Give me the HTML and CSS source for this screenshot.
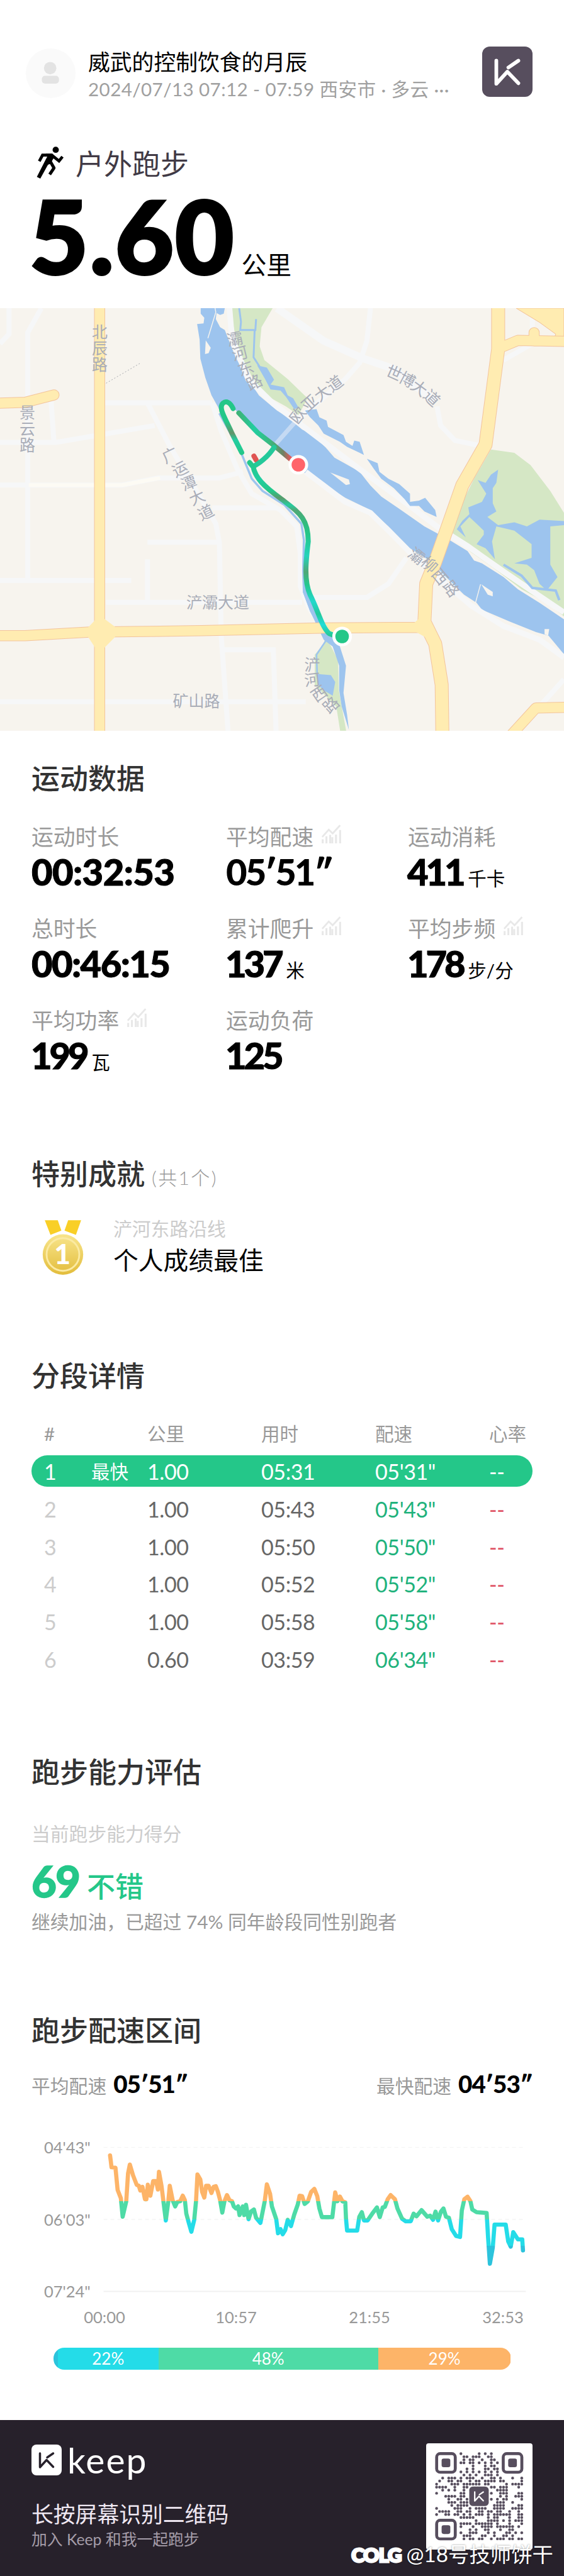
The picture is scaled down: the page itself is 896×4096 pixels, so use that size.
FILE: index.html
```html
<!DOCTYPE html>
<html lang="zh-CN">
<head>
    <meta charset="UTF-8">
    <meta name="viewport" content="width=device-width, initial-scale=1.0">
    <title>户外跑步 5.60 公里</title>
    <link rel="stylesheet" href="styles.css">
</head>
<body>

<!-- shared icons -->
<svg class="defs" width="0" height="0">
    <symbol id="icon-k" viewBox="0 0 96 96">
        <path d="M27 27V71L48 48L69 70M50 40L69 27" fill="none" stroke="currentColor" stroke-width="7" stroke-linecap="round" stroke-linejoin="round"/>
    </symbol>
    <symbol id="icon-chart" viewBox="0 0 110 110">
        <path d="M3 74L40 33L62 54L104 8" fill="none" stroke="#e8e8e8" stroke-width="10"/>
        <path d="M6 110V87M27 110V70M48 110V62M60 110V75M81 110V60M104 110V35" stroke="#e8e8e8" stroke-width="11"/>
    </symbol>
</svg>

<div class="page">
    <header class="header">
        <div class="avatar">
            <svg viewBox="0 0 96 96">
                <ellipse cx="47" cy="38" rx="12" ry="12" fill="#e3e3e3"/>
                <rect x="31" y="53" width="33" height="15" rx="6" fill="#e3e3e3"/>
            </svg>
        </div>
        <div class="user">
            <div class="user-name">威武的控制饮食的月辰</div>
            <div class="user-meta">2024/07/13 07:12 - 07:59 西安市 · 多云 ···</div>
        </div>
        <div class="app-logo"><svg><use href="#icon-k"/></svg></div>
    </header>

    <div class="intro">
        <div class="sport">
            <svg class="runner" viewBox="30 24 160 190">
                <circle cx="141" cy="45" r="18"/>
                <path d="M46 111L65 76H118L160 110L180 85" fill="none" stroke="#000" stroke-width="17"/>
                <path d="M84 68H122L134 84L110 126L96 132L52 212L32 202L92 84Z"/>
                <path d="M108 110L131 150L106 188" fill="none" stroke="#000" stroke-width="18" stroke-linejoin="round"/>
            </svg>
            <span>户外跑步</span>
        </div>
        <div class="distance"><b>5.60</b><span>公里</span></div>
    </div>

    <svg class="map" viewBox="0 0 896 672">
        <rect width="896" height="672" fill="#f7f4ee"/>
        <g class="shape" transform="scale(.5714 .4339)">
            <!-- minor roads -->
            <g class="road">
                <path d="M25 0V95L0 130M115 0L77 90V1000M142 340L150 492M0 492H155L430 430M290 347H590M410 347L470 500L600 790L610 860L615 1200L635 1568M410 858H605M0 998H365M410 920V1078M295 1078H840M0 648H340L440 622H610L660 605L675 598M590 732H770M618 1252H760L768 1568M0 1442H850"/>
                <path d="M1030 0L1020 120L1000 200L960 260L820 415"/>
                <path d="M1215 360L1225 430L1265 485L1350 508M1480 0V130L1400 190M860 1060H1020L1080 1010L1130 915M1568 1360L1500 1460"/>
                <path d="M590 347L615 450L660 590L700 680L780 740L825 800L835 900L835 1020L860 1100L890 1160"/>
            </g>
            <path class="road wide" d="M770 0L900 120L1010 185L1090 220L1210 340"/>
            <path d="M80 648H340L445 622" fill="none" stroke="#fdfbf4" stroke-width="6"/>

            <!-- parks -->
            <path fill="#d5e7c5" d="M645 0H758L727 70L722 140L735 190L800 260L855 330L830 392L795 360L740 320L700 250L665 160L648 60Z"/>
            <path fill="#d5e7c5" d="M1365 518L1430 530L1475 575L1530 670L1568 750V1130L1520 1080L1450 1030L1370 950L1310 895L1255 835L1275 740L1320 620Z"/>
            <path fill="#d5e7c5" d="M905 1200L940 1290L942 1400L965 1568H948L935 1460L905 1420L875 1380L875 1270L900 1230Z"/>

            <!-- river -->
            <path fill="#9dc4ee" d="M558 0H625L622 20L612 25L602 18L600 40L612 70L625 80L640 130L655 180L680 240L700 280L720 320L770 375L800 400L840 445L865 460L905 510L930 548L960 570L1000 600L1030 650L1060 690L1110 735L1180 800L1250 850L1300 890L1318 925L1340 935L1400 985L1440 1030L1500 1080L1568 1140V1268L1525 1200L1490 1187L1420 1150L1340 1105L1325 1080L1290 1050L1240 985L1200 930L1140 880L1080 800L1030 740L960 695L900 645L830 590L765 505L716 450L664 386L640 352L615 342L612 376L588 319L571 255L557 185L555 115L548 58L566 56L568 35L558 20Z"/>
            <path fill="#f7f4ee" d="M572 118L586 145L580 165L570 168ZM918 602L970 628L973 645L962 648ZM1338 1012L1370 1040L1370 1056L1356 1050ZM1514 1176L1527 1176L1524 1200L1514 1195Z"/>
            <path d="M598 0L600 15L578 110M1336 1012L1322 1080" fill="none" stroke="#f7f4ee" stroke-width="1.4"/>
            <path d="M822 415L765 500" fill="none" stroke="#c5daf3" stroke-width="7"/>
            <path class="road bank" d="M638 0L645 110L690 260L760 350L830 420L905 495L1000 590L1120 705L1220 805L1300 872L1400 965L1500 1055L1568 1115"/>
            <path class="road bank" d="M850 600L960 710L1030 750L1080 815L1140 895L1230 1000L1310 1090L1400 1165L1500 1215L1568 1280"/>

            <!-- streams and ponds -->
            <path d="M665 0L670 50L668 80H710L712 40M708 80L705 180L722 215" fill="none" stroke="#9dc4ee" stroke-width="3"/>
            <path fill="#9dc4ee" d="M715 210L742 218L762 262L752 280L790 290L800 320L815 330L830 365L818 370L795 325L780 302L752 298L738 262ZM848 375L880 370L888 400L908 412L912 435L955 465L962 490L980 505L985 485L1000 490L1012 538L1000 530L965 508L945 490L900 460L885 430L862 400ZM1020 552L1050 568L1055 600L1080 625L1110 645L1140 680L1140 710L1165 705L1182 695L1210 740L1214 765L1180 745L1165 725L1140 725L1125 700L1095 660L1060 625L1040 590Z"/>
            <path fill="#9dc4ee" d="M1385 592L1380 640L1370 660L1370 715L1380 745L1355 765L1385 795L1430 785L1465 800L1500 775L1568 780V795L1530 800L1530 940L1550 985L1520 1035L1500 1010L1485 960L1465 940L1430 935L1478 915L1478 865L1430 815L1380 800L1368 855L1376 920L1350 880L1325 865L1345 830L1345 815L1305 765L1280 800L1295 840L1270 810L1285 780L1305 755L1302 730L1340 710L1352 680L1328 630L1350 640L1365 610Z"/>
            <path d="M1400 940L1450 980L1480 1025L1545 1035L1555 1070" fill="none" stroke="#9dc4ee" stroke-width="4"/>
            <path d="M610 385L672 535L700 625L730 670L790 720L838 790L845 850L843 960L845 1040L865 1110L890 1170L910 1215" fill="none" stroke="#9dc4ee" stroke-width="3.5"/>
            <path fill="#9dc4ee" d="M842 1000L870 1060L905 1170L945 1240L962 1310L955 1410L965 1490L970 1545L950 1460L943 1400L943 1310L925 1240L900 1215L862 1110L842 1040ZM880 1340L920 1345L932 1370L925 1420L900 1400L884 1380Z"/>
            <path d="M908 1215L880 1270L882 1350" fill="none" stroke="#9dc4ee" stroke-width="2.5"/>

            <!-- main roads -->
            <path fill="#ffecb1" stroke="#f3bf94" stroke-width="1" d="M1435 0H1568V130L1540 115L1545 95L1500 52Z"/>
            <g class="major">
                <path class="casing w-s" d="M277 -5V1573"/>
                <path class="casing w-s" d="M-5 348L70 345L150 318"/>
                <path class="casing w-s" d="M-5 1200H70L250 1187L560 1182L900 1172L1100 1170H1180"/>
                <path class="casing w-m" d="M1385 -5V150L1350 500L1285 650L1245 800L1210 930L1185 1010L1180 1150L1210 1230L1228 1380L1230 1573"/>
                <path class="casing w-s" d="M1400 140L1440 118L1573 122M1485 90V120"/>
                <path class="casing w-s" d="M1415 1573L1490 1465L1573 1463"/>
                <path class="fill w-s" d="M277 -5V1573"/>
                <path class="fill w-s" d="M-5 348L70 345L150 318"/>
                <path class="fill w-s" d="M-5 1200H70L250 1187L560 1182L900 1172L1100 1170H1180"/>
                <path class="fill w-m" d="M1385 -5V150L1350 500L1285 650L1245 800L1210 930L1185 1010L1180 1150L1210 1230L1228 1380L1230 1573"/>
                <path class="fill w-s" d="M1400 140L1440 118L1573 122M1485 90V120"/>
                <path class="fill w-s" d="M1415 1573L1490 1465L1573 1463"/>
            </g>
            <path fill="#ffecb1" d="M245 1170L277 1125L320 1168V1205L290 1245H265L245 1205ZM1150 1155L1180 1120L1215 1210L1195 1215L1155 1185Z"/>
            <path d="M295 275L392 200" stroke="#8f949c" stroke-width=".8" stroke-dasharray="2 3"/>
        </g>

        <g id="map-labels" class="map-labels"></g>

        <!-- running track, coloured by pace -->
        <defs>
            <linearGradient id="track-main" gradientUnits="userSpaceOnUse" x1="0" y1="560" x2="0" y2="1205">
                <stop offset="0" stop-color="#24c789"/>
                <stop offset=".1" stop-color="#22cda0"/>
                <stop offset=".17" stop-color="#24c789"/>
                <stop offset=".21" stop-color="#5a9a6a"/>
                <stop offset=".25" stop-color="#25cc9f"/>
                <stop offset=".28" stop-color="#4fa877"/>
                <stop offset=".35" stop-color="#31ba7d"/>
                <stop offset=".42" stop-color="#24c789"/>
                <stop offset=".54" stop-color="#23d3bb"/>
                <stop offset=".63" stop-color="#4fa877"/>
                <stop offset=".7" stop-color="#25c78d"/>
                <stop offset=".8" stop-color="#23d8cc"/>
                <stop offset=".87" stop-color="#24c99b"/>
                <stop offset=".93" stop-color="#23dcd8"/>
                <stop offset="1" stop-color="#24c789"/>
            </linearGradient>
            <linearGradient id="track-left" gradientUnits="userSpaceOnUse" x1="0" y1="340" x2="0" y2="530">
                <stop offset=".4" stop-color="#24c789"/>
                <stop offset=".62" stop-color="#63946a"/>
                <stop offset=".75" stop-color="#23cda0"/>
                <stop offset="1" stop-color="#24c789"/>
            </linearGradient>
            <linearGradient id="track-end" gradientUnits="userSpaceOnUse" x1="664" y1="0" x2="810" y2="0">
                <stop offset="0" stop-color="#3db377"/>
                <stop offset=".3" stop-color="#23cda0"/>
                <stop offset=".6" stop-color="#3cb77c"/>
                <stop offset=".72" stop-color="#55a070"/>
                <stop offset=".85" stop-color="#727f62"/>
                <stop offset="1" stop-color="#f0535a"/>
            </linearGradient>
        </defs>
        <g class="shape track" transform="scale(.5714 .4339)">
            <path d="M706 542L712 556" stroke="#df5452"/>
            <path d="M648 368C640 345 629 338 620 348C606 365 625 400 645 459L672 529" stroke="url(#track-left)"/>
            <path d="M664 384L716 456L762 503L810 556" stroke="url(#track-end)"/>
            <path d="M762 510C745 545 720 570 704 580" stroke="#24c99a"/>
            <path d="M694 566L704 582C710 620 730 650 784 701C832 750 857 770 857 855C850 930 845 1000 862 1050C885 1110 895 1170 915 1192L940 1205" stroke="url(#track-main)"/>
        </g>
        <circle cx="474" cy="249" r="15.6" fill="#fff"/>
        <circle cx="474" cy="249" r="10.8" fill="#ff646b"/>
        <circle cx="543.5" cy="522" r="15.6" fill="#fff"/>
        <circle cx="543.5" cy="522" r="10.8" fill="#24c789"/>
    </svg>

    <section class="section data">
        <h2>运动数据</h2>
        <div class="stats">
            <div class="stat"><label>运动时长</label><div class="value">00:32:53</div></div>
            <div class="stat"><label>平均配速<svg><use href="#icon-chart"/></svg></label><div class="value avg">05′51″</div></div>
            <div class="stat"><label>运动消耗</label><div class="value tight">411<small>千卡</small></div></div>
            <div class="stat"><label>总时长</label><div class="value total">00:46:15</div></div>
            <div class="stat"><label>累计爬升<svg><use href="#icon-chart"/></svg></label><div class="value tight">137<small>米</small></div></div>
            <div class="stat"><label>平均步频<svg><use href="#icon-chart"/></svg></label><div class="value tight">178<small>步/分</small></div></div>
            <div class="stat"><label>平均功率<svg><use href="#icon-chart"/></svg></label><div class="value tight">199<small>瓦</small></div></div>
            <div class="stat"><label>运动负荷</label><div class="value tight">125</div></div>
        </div>
    </section>

    <section class="section awards">
        <h2>特别成就<small>(共1个)</small></h2>
        <div class="award">
            <svg class="medal" viewBox="0 0 80 106">
                <defs>
                    <linearGradient id="gold" x1="0" y1="0" x2="0" y2="1">
                        <stop offset="0" stop-color="#f8e58c"/>
                        <stop offset="1" stop-color="#e3bd3c"/>
                    </linearGradient>
                </defs>
                <path d="M5 0H30L37 20L16 28ZM50 0H75L65 28L43 20Z" fill="#f9cf27"/>
                <circle cx="40" cy="66" r="39" fill="url(#gold)"/>
                <circle cx="40" cy="66" r="31.5" fill="none" stroke="#fbeaa2" stroke-width="3.5"/>
                <text x="39" y="85" text-anchor="middle">1</text>
            </svg>
            <div>
                <div class="award-place">浐河东路沿线</div>
                <div class="award-name">个人成绩最佳</div>
            </div>
        </div>
    </section>

    <section class="section splits">
        <h2>分段详情</h2>
        <div class="row head"><span>#</span><span></span><span>公里</span><span>用时</span><span>配速</span><span>心率</span></div>
        <div class="row best"><span>1</span><span class="tag">最快</span><span>1.00</span><span>05:31</span><span>05'31"</span><span>--</span></div>
        <div class="row"><span>2</span><span></span><span>1.00</span><span>05:43</span><span>05'43"</span><span>--</span></div>
        <div class="row"><span>3</span><span></span><span>1.00</span><span>05:50</span><span>05'50"</span><span>--</span></div>
        <div class="row"><span>4</span><span></span><span>1.00</span><span>05:52</span><span>05'52"</span><span>--</span></div>
        <div class="row"><span>5</span><span></span><span>1.00</span><span>05:58</span><span>05'58"</span><span>--</span></div>
        <div class="row"><span>6</span><span></span><span>0.60</span><span>03:59</span><span>06'34"</span><span>--</span></div>
    </section>

    <section class="section ability">
        <h2>跑步能力评估</h2>
        <div class="ability-label">当前跑步能力得分</div>
        <div class="score"><b>69</b><span>不错</span></div>
        <div class="ability-tip">继续加油，已超过 74% 同年龄段同性别跑者</div>
    </section>

    <section class="section pace">
        <h2>跑步配速区间</h2>
        <div class="pace-row">
            <div>平均配速<b>05′51″</b></div>
            <div>最快配速<b>04′53″</b></div>
        </div>
    </section>
    <svg class="chart" viewBox="0 0 896 330">
        <defs>
            <linearGradient id="zones" gradientUnits="userSpaceOnUse" x1="0" y1="400" x2="0" y2="1000">
                <stop offset=".425" stop-color="#fdb468"/>
                <stop offset=".425" stop-color="#4edba6"/>
                <stop offset=".57" stop-color="#4edba6"/>
                <stop offset=".57" stop-color="#24dce8"/>
                <stop offset=".783" stop-color="#24dce8"/>
                <stop offset=".783" stop-color="#2cc3dc"/>
            </linearGradient>
        </defs>
        <g class="shape" fill="none" transform="translate(0 -94.7) scale(.5714 .328)">
            <path d="M288 394H1462M288 743H1462" stroke="#f5f5f5" stroke-width="1.6" stroke-dasharray="6 5"/>
            <path d="M288 1092H1462" stroke="#f1f1f1" stroke-width="2"/>
            <polyline stroke="url(#zones)" stroke-width="6.6" stroke-linecap="round" stroke-linejoin="round" points="306,433 308,460 310,490 321,492 327,600 336,640 341,730 351,655 356,520 361,477 370,530 380,575 386,580 390,603 396,585 403,645 407,645 411,575 418,628 426,557 434,557 439,598 442,512 449,580 454,650 461,748 468,655 472,580 480,650 487,680 493,658 501,655 508,628 514,650 518,715 525,760 532,803 540,745 545,655 549,525 557,550 562,610 568,637 573,580 580,580 588,615 594,585 600,582 606,610 612,650 618,710 624,655 631,625 638,650 645,655 650,680 656,690 662,680 666,722 675,680 679,722 684,672 691,742 698,705 706,695 712,735 724,760 736,655 742,573 751,620 756,680 768,742 773,810 780,790 786,815 793,795 800,745 809,775 818,720 828,670 833,628 840,630 847,668 856,655 865,610 874,595 882,630 888,690 895,732 924,732 932,612 938,655 945,632 952,655 960,660 962,740 965,797 993,797 999,730 1006,708 1012,748 1022,748 1035,715 1048,685 1056,732 1064,685 1070,682 1078,645 1086,625 1098,645 1105,690 1118,740 1128,752 1142,752 1150,715 1158,728 1172,698 1188,730 1196,725 1204,745 1211,705 1218,748 1226,705 1233,690 1240,730 1248,735 1256,790 1268,823 1279,828 1284,700 1291,645 1300,633 1308,655 1313,695 1325,708 1353,712 1357,830 1362,958 1370,880 1375,768 1406,768 1413,850 1420,875 1427,805 1440,840 1452,840 1454,893"/>
        </g>
        <g class="axis">
            <text x="70" y="44">04'43"</text>
            <text x="70" y="158.5">06'03"</text>
            <text x="70" y="273">07'24"</text>
            <g text-anchor="middle">
                <text x="166" y="314">00:00</text>
                <text x="375" y="314">10:57</text>
                <text x="587" y="314">21:55</text>
                <text x="799" y="314">32:53</text>
            </g>
        </g>
    </svg>
    <div class="zones">
        <div class="zone z1" style="width: 1%"></div>
        <div class="zone z2" style="width: 22%">22%</div>
        <div class="zone z3" style="width: 48%">48%</div>
        <div class="zone z4" style="width: 29%">29%</div>
    </div>

    <footer class="footer">
        <div>
            <div class="brand"><div class="brand-icon"><svg><use href="#icon-k"/></svg></div><span>keep</span></div>
            <div class="scan">长按屏幕识别二维码</div>
            <div class="join">加入 Keep 和我一起跑步</div>
        </div>
        <svg class="qr" id="qr" viewBox="0 0 612 612">
            <rect width="612" height="612" rx="14" fill="#fff"/>
        </svg>
        <div class="watermark"><b>COLG</b>@18号技师饼干</div>
    </footer>
</div>

<script>
    const SVG = 'http://www.w3.org/2000/svg';

    function add(parent, tag, attrs, text) {
        const el = document.createElementNS(SVG, tag);
        Object.keys(attrs).forEach(k => el.setAttribute(k, attrs[k]));
        if (text) el.textContent = text;
        parent.appendChild(el);
    }

    // street names: character, x, y, rotation
    const labels = [
        ['北', 158.5, 37.5, 0], ['辰', 158.5, 63.5, 0], ['路', 158.5, 90, 0],
        ['景', 43.5, 166, 0], ['云', 43.5, 192, 0], ['路', 43.5, 218, 0],
        ['灞', 373, 49, -12], ['河', 381, 72, -14], ['东', 390.5, 96, -20], ['路', 404, 118, -26],
        ['欧', 473, 170, -52], ['亚', 492, 151, -42], ['大', 512, 135, -36], ['道', 532, 120, -36],
        ['世', 626, 103, 24], ['博', 647, 114, 28], ['大', 666, 127, 36], ['道', 686, 143, 44],
        ['广', 270, 234, -26], ['运', 286, 256, -26], ['潭', 300, 278, -22], ['大', 313, 301, -24], ['道', 327, 325, -26],
        ['灞', 662, 394, 38], ['柳', 682, 408, 42], ['西', 699, 427, 50], ['路', 717, 446, 54],
        ['浐', 496, 567, 0], ['河', 496, 591, -6], ['西', 507, 613, -34], ['路', 526, 631, -42]
    ];
    const layer = document.getElementById('map-labels');
    labels.forEach(([c, x, y, r]) => {
        add(layer, 'text', { transform: `translate(${x} ${y}) rotate(${r})`, y: 9 }, c);
    });
    add(layer, 'text', { x: 346, y: 477 }, '浐灞大道');
    add(layer, 'text', { x: 312, y: 634 }, '矿山路');

    // filled columns of each QR row, finder patterns excluded
    const rows = [
        '8 14 16 18', '9 10 12 13 14 17 18', '9 11 12 15 18 19', '8 9 11 12 14 16 18 20',
        '12 16 18 19', '10 12 16 17 19 20', '8 10 12 14 16 18 20', '9 11 13 16 17 18 20',
        '2 4 5 6 8 10 11 12 15 18 19 21 25 28', '1 4 5 7 8 11 13 14 16 17 18 19 21 22 28',
        '0 5 6 7 9 10 11 12 13 14 16 17 23 25 26 27 28', '0 1 2 3 6 9 10 18 19 21 22 23 27',
        '2 4 6 9 20 21 22 23', '0 8 9 18 21 22 23 27 28', '3 4 5 6 8 9 21 23 26 27 28',
        '4 7 8 10 18 20 22 23 28', '4 5 6 8 9 10 20 21 22 25', '5 7 8 9 10 19 20 21 22 27 28',
        '0 6 7 8 11 13 14 15 16 19 20 21 22 25 26 27 28', '1 2 3 4 7 8 10 11 14 15 17 18 20 21 24 27',
        '0 3 4 6 7 9 11 13 14 15 17 19 20 21 22 23 24 27 28', '8 9 10 11 12 17 19 20 24 27 28',
        '13 17 18 19 20 22 24 26 27 28', '8 9 10 11 13 14 15 16 17 18 20 24 28',
        '8 12 15 16 17 18 20 21 22 23 24 25 27', '11 13 16 17 21 24 25', '8 11 12 13 17 19 23 24 26 28',
        '9 10 11 15 16 19 22 23 25', '9 11 12 14 15 18 20 21 22 24 25 27 28'
    ];
    const qr = document.getElementById('qr');
    rows.forEach((row, r) => {
        row.split(' ').forEach(c => {
            add(qr, 'circle', { cx: 60 + c * 17.5, cy: 60 + r * 17.5, r: 8, fill: '#574e5e' });
        });
    });
    [[52, 51], [435, 51], [52, 435]].forEach(([x, y]) => {
        add(qr, 'rect', { x: x + 8.5, y: y + 8.5, width: 107, height: 107, rx: 20, fill: '#fff', stroke: '#574e5e', 'stroke-width': 17 });
        add(qr, 'rect', { x: x + 37, y: y + 37, width: 50, height: 50, rx: 12, fill: '#574e5e' });
    });
    add(qr, 'rect', { x: 248, y: 249, width: 112, height: 112, rx: 20, fill: '#574e5e' });
    add(qr, 'use', { href: '#icon-k', x: 248, y: 249, width: 112, height: 112, color: '#fff' });
</script>

</body>
</html>
```
FILE: styles.css
```css
* {
    box-sizing: border-box;
}
body {
    margin: 0;
    background: #fff;
    color: #000;
    font-family: Lato, "Noto Sans CJK SC", sans-serif;
}
.defs {
    position: absolute;
}
.page {
    width: 896px;
    height: 4096px;
    overflow: hidden;
}

/* header */
.header {
    display: flex;
    padding: 74px 50px 0 41px;
    height: 163px;
}
.avatar {
    width: 79px;
    height: 79px;
    margin-top: 3px;
    border-radius: 50%;
    background: #fafafa;
}
.avatar svg {
    display: block;
    width: 79px;
}
.user {
    flex: 1;
    margin: 4px 0 0 20px;
    line-height: 42px;
    white-space: nowrap;
}
.user-name {
    font-size: 34.8px;
    height: 43px;
}
.user-meta {
    font-size: 29.6px;
    letter-spacing: .4px;
    color: #a0a0a0;
}
.app-logo {
    width: 80px;
    height: 80px;
    border-radius: 12px;
    background: #574e5e;
    color: #fff;
}
.app-logo svg {
    display: block;
    width: 80px;
    height: 80px;
}

/* sport and distance */
.intro {
    height: 327px;
    padding: 65px 50px 0;
}
.sport {
    display: flex;
    align-items: center;
    height: 60px;
    font-size: 45px;
    color: #413a45;
}
.runner {
    width: 44px;
    height: 53px;
    margin: 0 18px 0 8px;
}
.distance {
    display: flex;
    align-items: baseline;
    line-height: 120px;
    margin-top: 26px;
}
.distance b {
    font-size: 161px;
    font-weight: 900;
    letter-spacing: 2px;
    margin-left: -3px;
    -webkit-text-stroke: 4px #000;
}
.distance span {
    font-size: 39.8px;
    margin-left: 10px;
}

/* map */
.map {
    display: block;
    width: 896px;
    height: 672px;
}
.shape * {
    vector-effect: non-scaling-stroke;
}
.road {
    fill: none;
    stroke: #f6f7f8;
    stroke-width: 8;
}
.wide {
    stroke-width: 12;
}
.bank {
    stroke-width: 9;
}
.major {
    fill: none;
    stroke-linecap: round;
    stroke-linejoin: round;
}
.casing {
    stroke: #f3c49c;
}
.fill {
    stroke: #ffecb1;
}
.casing.w-s {
    stroke-width: 17.5;
}
.fill.w-s {
    stroke-width: 15.5;
}
.casing.w-m {
    stroke-width: 22;
}
.fill.w-m {
    stroke-width: 20;
}
.track {
    fill: none;
    stroke-width: 8;
    stroke-linecap: round;
    stroke-linejoin: round;
}
.map-labels {
    font-size: 25px;
    fill: #a9adb8;
    text-anchor: middle;
}

/* sections */
.section {
    padding: 0 50px;
}
.section h2 {
    margin: 0;
    height: 60px;
    line-height: 60px;
    font-size: 45px;
    font-weight: 500;
    color: #333;
}
.section h2 small {
    margin-left: 11px;
    font-size: 30px;
    font-weight: 300;
    letter-spacing: 2.4px;
    color: #999;
}

.data {
    padding-top: 46px;
}
.stats {
    display: grid;
    grid-template-columns: 309px 289px 1fr;
    row-gap: 38px;
    margin-top: 39px;
}
.stat {
    height: 108px;
    white-space: nowrap;
}
.stat label {
    display: flex;
    align-items: center;
    height: 48px;
    padding-bottom: 4px;
    font-size: 34.8px;
    color: #999;
}
.stat label svg {
    width: 31px;
    height: 31px;
    margin: -7px 0 0 13px;
}
.value {
    line-height: 62px;
    font-size: 58px;
    font-weight: 900;
    letter-spacing: -.6px;
    -webkit-text-stroke: 1px #000;
}
.value.total {
    letter-spacing: -1.6px;
}
.value.avg {
    letter-spacing: -3px;
    -webkit-text-stroke: 0;
}
.value.tight {
    letter-spacing: -4.2px;
    margin-left: -1px;
}
.value small {
    margin-left: 8px;
    font-size: 29.5px;
    font-weight: 400;
    letter-spacing: 0;
    -webkit-text-stroke: 0;
}

.awards {
    padding-top: 130px;
}
.award {
    display: flex;
    margin-top: 37px;
    height: 95px;
}
.medal {
    width: 66px;
    height: 88px;
    margin: 6px 47px 0 17px;
}
.medal text {
    font-size: 54px;
    font-weight: 900;
    fill: #fff;
}
.award-place {
    line-height: 40px;
    font-size: 29.8px;
    color: #ccc;
}
.award-name {
    margin-top: 5px;
    line-height: 50px;
    font-size: 39.8px;
}

.splits {
    padding-top: 129px;
}
.row {
    display: grid;
    grid-template-columns: 75px 89px 181px 181px 181px 1fr;
    height: 49.5px;
    margin-bottom: 10.3px;
    padding-left: 20px;
    line-height: 52px;
    font-size: 34px;
    color: #666;
    letter-spacing: -.4px;
}
.row span:first-child {
    color: #ccc;
}
.row span:nth-child(5) {
    color: #20b27c;
}
.row span:nth-child(6) {
    color: #e05768;
}
.row.head {
    height: 50px;
    line-height: 50px;
    margin: 37px 0 9px;
    font-size: 29.5px;
    letter-spacing: 0;
}
.row.head span {
    color: #999;
}
.row.best {
    border-radius: 25px;
    background: #24c789;
}
.row.best span {
    color: #fff;
}
.row .tag {
    font-size: 29.5px;
    letter-spacing: 0;
}

.ability {
    padding-top: 115px;
}
.ability-label {
    margin-top: 48px;
    line-height: 40px;
    font-size: 29.8px;
    color: #ccc;
}
.score {
    display: flex;
    align-items: baseline;
    height: 70px;
    margin-top: 20px;
    line-height: 70px;
    color: #24c789;
}
.score b {
    font-size: 69px;
    font-weight: 900;
    letter-spacing: -2px;
    -webkit-text-stroke: 1.4px #24c789;
}
.score span {
    margin-left: 12px;
    font-size: 45px;
    font-weight: 500;
}
.ability-tip {
    margin-top: 10px;
    line-height: 40px;
    font-size: 29.8px;
    color: #999;
}

.pace {
    padding-top: 123.6px;
}
.pace-row {
    display: flex;
    justify-content: space-between;
    height: 50px;
    margin-top: 29px;
    line-height: 50px;
    font-size: 29.8px;
    color: #999;
}
.pace-row b {
    margin-left: 11px;
    font-size: 38.6px;
    font-weight: 900;
    letter-spacing: -1px;
    color: #000;
}
.chart {
    display: block;
    width: 896px;
    height: 330px;
    margin-top: 41.7px;
}
.axis {
    font-size: 25.5px;
    fill: #999;
}
.zones {
    display: flex;
    height: 35px;
    margin: 23px 84.5px 0;
    border-radius: 17px;
    overflow: hidden;
}
.zone {
    line-height: 35px;
    font-size: 26px;
    text-align: center;
    color: #fff;
}
.z1 {
    background: #2cc3dc;
}
.z2 {
    background: #24dce8;
}
.z3 {
    background: #4edba6;
}
.z4 {
    background: #fdb468;
}

/* footer */
.footer {
    position: relative;
    display: flex;
    justify-content: space-between;
    height: 249px;
    margin-top: 79.5px;
    padding: 37.5px 50px 0;
    background: #27212b;
}
.brand {
    display: flex;
    align-items: center;
    height: 52px;
    color: #fff;
    font-size: 57px;
    letter-spacing: 2px;
}
.brand-icon {
    width: 48px;
    height: 49px;
    margin-right: 9px;
    border-radius: 8px;
    background: #fff;
    color: #27212b;
}
.brand-icon svg {
    display: block;
    width: 48px;
    height: 49px;
}
.scan {
    margin-top: 38px;
    line-height: 46px;
    font-size: 34.8px;
    color: #efe8f2;
}
.join {
    margin-top: 1px;
    line-height: 32px;
    font-size: 24.8px;
    color: #a59da9;
}
.qr {
    width: 169px;
    height: 169px;
}
.watermark {
    position: absolute;
    right: 17px;
    bottom: 13px;
    line-height: 44px;
    font-size: 33.4px;
    color: #fff;
    text-shadow: 0 0 3px rgba(0, 0, 0, .45);
    white-space: nowrap;
}
.watermark b {
    margin-right: 8px;
    font-size: 31px;
    font-weight: 900;
    letter-spacing: -1px;
    -webkit-text-stroke: 3px #fff;
}
```
